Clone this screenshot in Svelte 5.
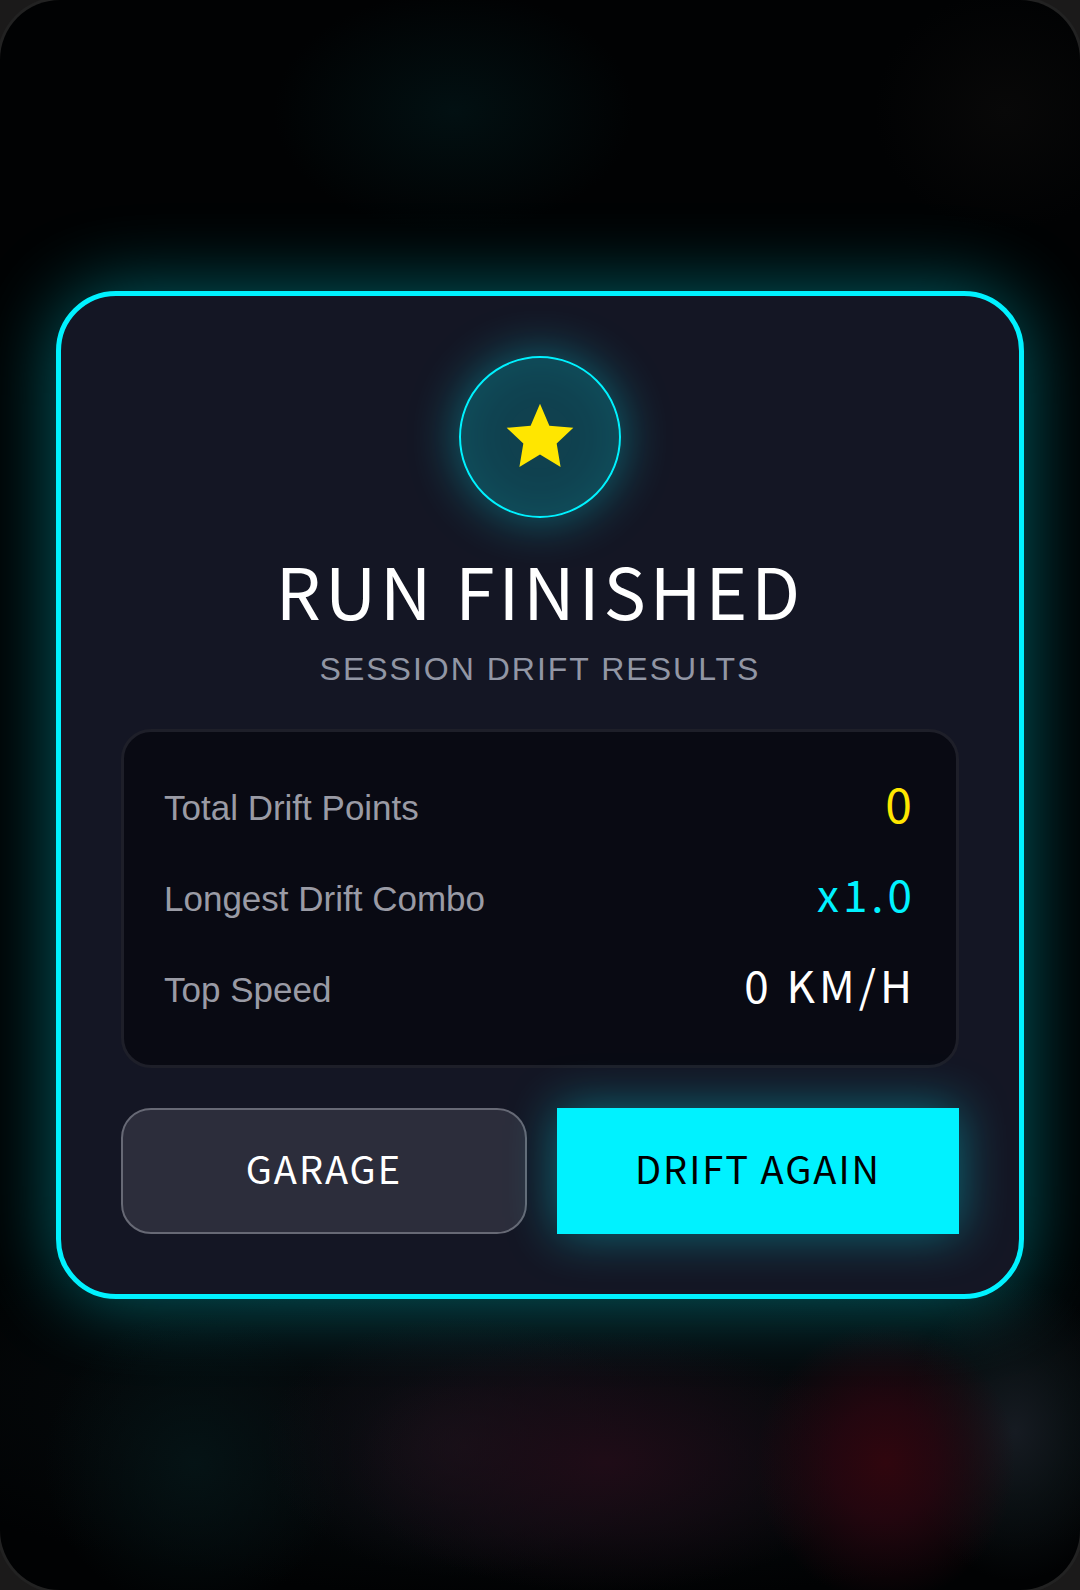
<!-- App.svelte - Run results dialog shown when a drift session ends -->

<script lang="ts">
  type Stat = { label: string; value: string; tone: string };

  let stats: Stat[] = $state([
    { label: 'Total Drift Points', value: '0', tone: 'points' },
    { label: 'Longest Drift Combo', value: 'x1.0', tone: 'combo' },
    { label: 'Top Speed', value: '0 KM/H', tone: 'speed' }
  ]);
</script>

<div class="screen">
  <main class="overlay">
    <div class="modal" role="dialog" aria-labelledby="dialog-title">
      <div class="badge">
        <svg viewBox="0 0 24 24" aria-hidden="true">
          <path
            d="M12 17.27 18.18 21l-1.18-7.03L22 9.24l-7.19-.61L12 2 9.19 8.63 2 9.24l5 4.73L5.82 21z"
          />
        </svg>
      </div>

      <h1 id="dialog-title">RUN FINISHED</h1>
      <p class="subtitle">SESSION DRIFT RESULTS</p>

      <dl class="stats">
        {#each stats as stat}
          <div class="row">
            <dt>{stat.label}</dt>
            <dd class={stat.tone}>{stat.value}</dd>
          </div>
        {/each}
      </dl>

      <div class="actions">
        <button type="button" class="btn-garage">GARAGE</button>
        <button type="button" class="btn-again">DRIFT AGAIN</button>
      </div>
    </div>
  </main>
</div>

<style>
  :global(body) {
    margin: 0;
    background: #1b1a1a;
  }

  .screen {
    --cyan: #00f2ff;
    --display: 'Noto Sans CJK SC', sans-serif;
    min-height: 100vh;
    font-family: 'Liberation Sans', Arial, sans-serif;
    color: #fff;
  }

  .overlay {
    display: flex;
    align-items: center;
    justify-content: center;
    box-sizing: border-box;
    min-height: 100vh;
    padding: 56px;
    border-radius: 60px;
    box-shadow: 0 0 0 3px #222;
    overflow: hidden;
    /* soft glow of the track behind the dialog */
    background:
      radial-gradient(ellipse 180px 120px at 42% 7%, #021012, transparent),
      radial-gradient(ellipse 130px 120px at 93% 7%, #080808, transparent),
      radial-gradient(ellipse 130px 140px at 82% 92%, #30060e, #2a0610d0 40%, transparent),
      radial-gradient(ellipse 110px 150px at 94% 90%, #161b22, #10181c90 50%, transparent),
      radial-gradient(ellipse 260px 130px at 56% 92%, #1f0c17, #1a0c16a0 50%, transparent),
      radial-gradient(ellipse 200px 130px at 43% 91%, #17131a, #110f1690 50%, transparent),
      radial-gradient(ellipse 150px 150px at 18% 92%, #051315, transparent),
      radial-gradient(ellipse 720px 200px at 52% 88%, #080b0f, #04080a 60%, transparent),
      #010203;
  }

  .modal {
    box-sizing: border-box;
    width: 100%;
    padding: 60px;
    border: 5px solid var(--cyan);
    border-radius: 60px;
    background: #141624;
    box-shadow: 0 0 80px rgba(0, 242, 255, 0.4);
    text-align: center;
  }

  .badge {
    display: flex;
    align-items: center;
    justify-content: center;
    box-sizing: border-box;
    width: 162px;
    height: 162px;
    margin: 0 auto 26px;
    border: 2px solid var(--cyan);
    border-radius: 50%;
    background: rgba(0, 242, 255, 0.2);
    box-shadow:
      0 0 50px rgba(0, 242, 255, 0.4),
      inset 0 0 50px rgba(0, 242, 255, 0.1);
  }

  .badge svg {
    width: 80px;
    height: 80px;
    fill: #ffe600;
  }

  h1 {
    margin: 0;
    font-family: var(--display);
    font-size: 71px;
    font-weight: 400;
    line-height: 90px;
    letter-spacing: 4px;
  }

  .subtitle {
    margin: 17px 0 42px;
    font-size: 32px;
    line-height: 36px;
    letter-spacing: 2px;
    color: #9296a4;
  }

  .stats {
    display: flex;
    flex-direction: column;
    gap: 30px;
    margin: 0 0 40px;
    padding: 45px 40px;
    border: 3px solid #1e1f29;
    border-radius: 30px;
    background: #090a13;
  }

  .row {
    display: flex;
    align-items: flex-start;
    justify-content: space-between;
    line-height: 61px;
  }

  dt {
    font-size: 35px;
    color: #9a9ba5;
  }

  dd {
    margin: 0;
    font-family: var(--display);
    font-size: 44px;
    line-height: 50px;
    letter-spacing: 4px;
  }

  .points {
    font-size: 48px;
    color: #ffe600;
  }

  .combo {
    color: var(--cyan);
  }

  .actions {
    display: flex;
    gap: 30px;
  }

  button {
    flex: 1;
    height: 126px;
    padding: 0 0 8px;
    border: none;
    font-family: var(--display);
    font-size: 38px;
    letter-spacing: 2px;
    cursor: pointer;
  }

  .btn-garage {
    border: 2px solid #676975;
    border-radius: 30px;
    background: #2c2d3b;
    color: #fff;
  }

  .btn-again {
    background: var(--cyan);
    box-shadow: 0 0 50px rgba(0, 242, 255, 0.4);
    color: #000;
  }
</style>
